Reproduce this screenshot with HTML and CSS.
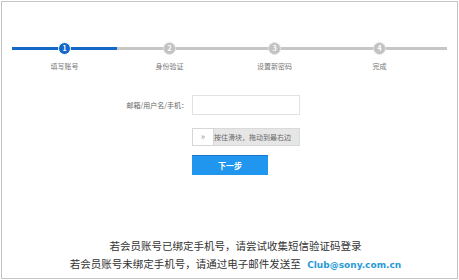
FILE: index.html
```html
<!DOCTYPE html>
<html lang="zh-CN">
<head>
    <meta charset="UTF-8">
    <title>找回密码</title>
    <link rel="stylesheet" href="styles.css">
</head>
<body>
    <div class="frame">
        <!-- step indicator -->
        <div class="progress">
            <div class="step active">
                <span class="dot">1</span>
                <span class="step-label">填写账号</span>
            </div>
            <div class="step">
                <span class="dot">2</span>
                <span class="step-label">身份验证</span>
            </div>
            <div class="step">
                <span class="dot">3</span>
                <span class="step-label">设置新密码</span>
            </div>
            <div class="step">
                <span class="dot">4</span>
                <span class="step-label">完成</span>
            </div>
        </div>

        <form class="form">
            <div class="row">
                <label class="field-label" for="account">邮箱/用户名/手机：</label>
                <input class="field-input" id="account" type="text">
            </div>
            <div class="row">
                <span class="field-label"></span>
                <div class="slider">
                    <span class="slider-handle">&raquo;</span>
                    <span class="slider-text">按住滑块，拖动到最右边</span>
                </div>
            </div>
            <div class="row">
                <span class="field-label"></span>
                <button class="btn-next" type="button">下一步</button>
            </div>
        </form>

        <div class="notice">
            <p>若会员账号已绑定手机号，请尝试收集短信验证码登录</p>
            <p>若会员账号未绑定手机号，请通过电子邮件发送至 <a href="#" class="mail">Club@sony.com.cn</a></p>
        </div>
    </div>
</body>
</html>
```

FILE: styles.css
```css
body {
    margin: 0;
    padding: 1px;
    background: #fff;
    font-family: "Noto Sans CJK SC", "Liberation Sans", sans-serif;
    color: #333;
}

.frame {
    box-sizing: border-box;
    width: 457px;
    height: 278px;
    border: 1px solid #c4c4c4;
    padding-top: 40px;
}

/* steps */
.progress {
    position: relative;
    display: flex;
    width: 435px;
    margin-left: 10px;
}

.progress::before {
    content: "";
    position: absolute;
    left: 0;
    right: 0;
    top: 5px;
    height: 3px;
    background: #c6c6c6;
}

.step {
    position: relative;
    width: 105px;
    display: flex;
    flex-direction: column;
    align-items: center;
}

.step.active::before {
    content: "";
    position: absolute;
    left: 0;
    right: 0;
    top: 5px;
    height: 3px;
    background: #1468c8;
}

.dot {
    position: relative;
    box-sizing: border-box;
    width: 13px;
    height: 13px;
    line-height: 11px;
    border-radius: 50%;
    border: 1px solid #e6e6e6;
    background: #c2c2c2;
    color: #fff;
    font-size: 7px;
    font-weight: bold;
    text-align: center;
}

.step.active .dot {
    background: #1468c8;
    border-color: #fff;
}

.step-label {
    margin-top: 6px;
    font-size: 7px;
    color: #777;
}

/* form */
.form {
    margin-top: 24px;
}

.row {
    display: flex;
    align-items: center;
    margin-bottom: 13px;
}

.row + .row {
    margin-bottom: 9px;
}

.field-label {
    width: 186px;
    text-align: right;
    font-size: 7px;
    color: #666;
    padding-right: 4px;
}

.field-input {
    box-sizing: border-box;
    width: 108px;
    height: 20px;
    border: 1px solid #e2e2e2;
    margin: 0;
}

.slider {
    box-sizing: border-box;
    display: flex;
    align-items: center;
    width: 108px;
    height: 18px;
    background: #e6e6e6;
    border: 1px solid #dadada;
}

.slider-handle {
    box-sizing: border-box;
    width: 22px;
    height: 18px;
    margin: -1px 0 0 -1px;
    line-height: 16px;
    background: #fff;
    border: 1px solid #d6d6d6;
    color: #999;
    font-size: 9px;
    text-align: center;
}

.slider-text {
    font-size: 7px;
    color: #666;
    white-space: nowrap;
}

.btn-next {
    width: 76px;
    height: 20px;
    border: none;
    border-top: 1px solid #1c76c8;
    background: #2196ee;
    color: #fff;
    font-family: inherit;
    font-size: 8px;
    font-weight: bold;
    padding: 0;
}

/* bottom notice */
.notice {
    margin-top: 62px;
    padding-left: 12px;
    text-align: center;
    font-size: 10.5px;
    line-height: 18px;
}

.notice p {
    margin: 0;
}

.mail {
    margin-left: 4px;
    color: #2a9ad6;
    text-decoration: none;
    font-family: "DejaVu Sans", sans-serif;
    font-size: 9px;
    font-weight: bold;
}
```
